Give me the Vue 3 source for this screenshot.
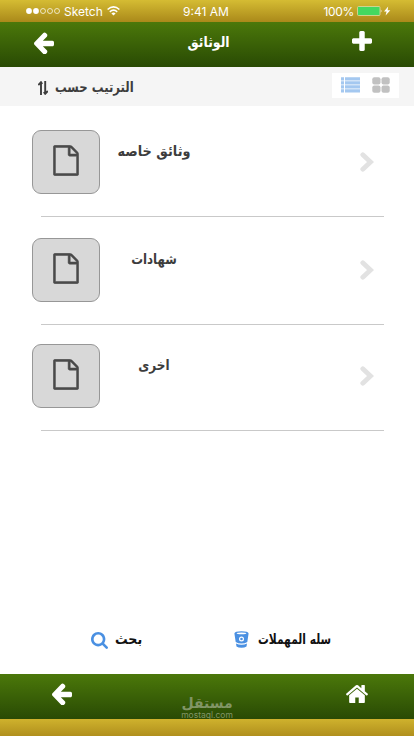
<script setup>
const paths = {
  arrow: { box: '192 147 1472 1558', d: 'M1664 896v128q0 53-32.5 90.5t-84.5 37.5h-704l293 294q38 36 38 90t-38 90l-75 76q-37 37-90 37-52 0-91-37l-651-652q-37-37-37-90 0-52 37-91l651-650q38-38 91-38 52 0 90 38l75 74q38 38 38 91t-38 91l-293 293h704q52 0 84.5 37.5t32.5 90.5z' },
  plus: { box: '192 128 1408 1408', d: 'M1600 736v192q0 40-28 68t-68 28h-416v416q0 40-28 68t-68 28h-192q-40 0-68-28t-28-68v-416h-416q-40 0-68-28t-28-68v-192q0-40 28-68t68-28h416v-416q0-40 28-68t68-28h192q40 0 68 28t28 68v416h416q40 0 68 28t28 68z' },
  file: { box: '-20 -20 1576 1832', d: 'M1468 380q28 28 48 76t20 88v1152q0 40-28 68t-68 28h-1344q-40 0-68-28t-28-68v-1600q0-40 28-68t68-28h896q40 0 88 20t76 48zm-444-244v376h376q-10-29-22-41l-313-313q-12-12-41-22zm384 1528v-1024h-416q-40 0-68-28t-28-68v-416h-768v1536h1280z' },
  search: { box: '64 128 1664 1664', d: 'M1216 832q0-185-131.5-316.5t-316.5-131.5-316.5 131.5-131.5 316.5 131.5 316.5 316.5 131.5 316.5-131.5 131.5-316.5zm512 832q0 52-38 90t-90 38q-54 0-90-38l-343-342q-179 124-399 124-143 0-273.5-55.5t-225-150-150-225-55.5-273.5 55.5-273.5 150-225 225-150 273.5-55.5 273.5 55.5 225 150 150 225 55.5 273.5q0 220-124 399l343 343q37 37 37 90z' },
  home: { box: '88 253 1616 1283', d: 'M1472 992v480q0 26-19 45t-45 19h-384v-384h-256v384h-384q-26 0-45-19t-19-45v-480q0-1 .5-3t.5-3l575-474 575 474q1 2 1 6zm223-69l-62 74q-8 9-21 11h-3q-13 0-21-7l-692-577-692 577q-12 8-24 7-13-2-21-11l-62-74q-8-10-7-23.5t11-21.5l719-599q32-26 76-26t76 26l244 204v-195q0-14 9-23t23-9h192q14 0 23 9t9 23v408l219 182q10 8 11 21.5t-7 23.5z' },
}
const folders = [
  { name: 'وثائق خاصه', stretch: 0.92 },
  { name: 'شهادات', stretch: 0.84 },
  { name: 'اخرى', stretch: 0.86 },
]
</script>

<template>
  <div class="screen">
    <div class="status">
      <div class="carrier">
        <svg class="signal" viewBox="0 0 34 6"><g fill="#fff"><circle cx="3" cy="3" r="2.9" /><circle cx="10" cy="3" r="2.9" /></g><g fill="none" stroke="#fff" stroke-width=".7"><circle cx="17" cy="3" r="2.5" /><circle cx="24" cy="3" r="2.5" /><circle cx="31" cy="3" r="2.5" /></g></svg>
        <span>Sketch</span>
        <svg class="wifi" viewBox="0 0 13 10"><g fill="none" stroke="#fff" stroke-width="1.6"><path d="M.6 3.5Q6.5-1.7 12.4 3.5" /><path d="M2.8 5.8Q6.5 2.6 10.2 5.8" /></g><path d="M4.4 7.4Q6.5 5.8 8.6 7.4L6.5 9.6Z" fill="#fff" /></svg>
      </div>
      <span class="clock">9:41 AM</span>
      <div class="power">
        <span>100%</span>
        <svg class="battery" viewBox="0 0 34 10"><rect x=".5" y=".5" width="22.5" height="9" rx="1" fill="#44d860" stroke="#e5d7a0" stroke-width=".8" /><path d="M23.8 3.3q1.5 1.7 0 3.4z" fill="#fff" /><path d="M31.2.5L27 5.6h2.6L28.6 9.6 33.3 4.2h-2.7z" fill="#fff" /></svg>
      </div>
    </div>

    <header class="bar">
      <svg class="arrow" :viewBox="paths.arrow.box" preserveAspectRatio="none"><path :d="paths.arrow.d" /></svg>
      <h1>الوثائق</h1>
      <svg class="plus" :viewBox="paths.plus.box"><path :d="paths.plus.d" /></svg>
    </header>

    <div class="tools">
      <div class="sort">
        <svg class="sort-icon" viewBox="0 0 10 14"><g fill="none" stroke="#3d3d3d" stroke-width="1.9"><path d="M3 14V1.5M.3 4 3 1.2 4.2 3" /><path d="M7.2 0v12.5M5.8 11l1.4 1.8L9.8 10" /></g></svg>
        <span class="sort-label" dir="rtl">الترتيب حسب</span>
      </div>
      <div class="views">
        <svg class="list-icon" viewBox="0 0 19 16"><g fill="#a4c8f0"><path d="M0 .3h3v3.2H0zM4 .3h15v3.2H4zM0 4.3h3v3.2H0zM4 4.3h15v3.2H4zM0 8.3h3v3.2H0zM4 8.3h15v3.2H4zM0 12.3h3v3.2H0zM4 12.3h15v3.2H4z" /></g></svg>
        <svg class="grid-icon" viewBox="0 0 18 16"><g fill="#c1c1c1"><rect x=".3" y=".3" width="8.2" height="7.2" rx="2" /><rect x="9.5" y=".3" width="8.2" height="7.2" rx="2" /><rect x=".3" y="8.5" width="8.2" height="7.2" rx="2" /><rect x="9.5" y="8.5" width="8.2" height="7.2" rx="2" /></g></svg>
      </div>
    </div>

    <main class="folders">
      <div v-for="folder in folders" :key="folder.name" class="folder">
        <div class="row">
          <div class="thumb"><svg class="file" :viewBox="paths.file.box" preserveAspectRatio="none"><path :d="paths.file.d" /></svg></div>
          <span class="name" dir="rtl" :style="{ transform: `scaleX(${folder.stretch})` }">{{ folder.name }}</span>
          <svg class="chevron" viewBox="0 0 14 20"><path d="M2.8 2.8 10.5 10l-7.7 7.2" fill="none" stroke="#e2e2e2" stroke-width="4.8" stroke-linecap="round" /></svg>
        </div>
      </div>
    </main>

    <div class="actions">
      <div class="action find">
        <svg class="search" :viewBox="paths.search.box"><path :d="paths.search.d" /></svg>
        <span class="find-label" dir="rtl">بحث</span>
      </div>
      <div class="action trash">
        <svg class="bin" viewBox="0 0 15 17"><path d="M.4 2.6Q.7.2 7.5.2t7.1 2.4L13.3 11q-2.3 1.6-5.8 1.6T1.7 11zM2 12.4q2.5 1.4 5.5 1.4t5.5-1.4l-.5 3q-1.8 1.4-5 1.4t-5-1.4z" fill="#4a90e2" /><ellipse cx="7.5" cy="2.4" rx="4.8" ry=".8" fill="#fff" /><circle cx="7.5" cy="8" r="1.9" fill="none" stroke="#fff" stroke-width="1.2" /></svg>
        <span class="trash-label" dir="rtl">سله المهملات</span>
      </div>
    </div>

    <footer class="bar bottom">
      <svg class="arrow" :viewBox="paths.arrow.box" preserveAspectRatio="none"><path :d="paths.arrow.d" /></svg>
      <div class="brand"><span class="brand-name" dir="rtl">مستقل</span><span class="brand-site">mostaql.com</span></div>
      <svg class="home" :viewBox="paths.home.box" preserveAspectRatio="none"><path :d="paths.home.d" /></svg>
    </footer>
    <div class="base"></div>
  </div>
</template>

<style>
body { margin: 0; }
</style>

<style scoped>
* { box-sizing: border-box; }
svg { display: block; flex: none; }
span { white-space: nowrap; }
.screen { width: 414px; height: 736px; background: #fff; display: flex; flex-direction: column; overflow: hidden; font-family: "DejaVu Sans", sans-serif; color: #3d3d3d; }
.status { height: 22px; flex: none; background: linear-gradient(#d5bc33, #aa891a); display: grid; grid-template-columns: 1fr auto 1fr; align-items: center; padding: 2px 23px 0 26px; color: #fff; font: 12px/18px Inter, sans-serif; }
.clock { margin: 0 5px 0 0; }
.carrier, .power { display: flex; align-items: center; }
.carrier { gap: 4px; }
.signal { width: 34px; height: 6px; margin-top: -2px; }
.wifi { width: 13px; height: 10px; margin-top: -3px; }
.power { justify-content: flex-end; gap: 3px; letter-spacing: -.3px; }
.battery { width: 34px; height: 10px; margin-top: -3px; }
.bar { height: 45px; flex: none; background: linear-gradient(#4b780a, #294a04); display: grid; grid-template-columns: 1fr auto 1fr; padding: 0 42px 0 34px; fill: #fff; }
.arrow { width: 20px; height: 22px; margin-top: 10px; }
h1 { margin: 10px -11px 0 0; font-size: 14px; line-height: 20px; font-weight: bold; color: #fff; transform: scaleX(.89); }
.plus { width: 20px; height: 20px; margin-top: 9px; justify-self: end; }
.tools { height: 39px; flex: none; background: #f5f5f5; display: flex; justify-content: space-between; padding: 6px 15px 0 38px; }
.sort { display: flex; gap: 7px; height: 28px; align-items: center; font-size: 14px; font-weight: bold; }
.sort-label { transform: scaleX(.835); transform-origin: left; }
.sort-icon { width: 10px; height: 14px; margin-top: 1px; }
.views { width: 67px; height: 25px; background: #fff; display: flex; gap: 12px; padding: 4px 9px; }
.list-icon { width: 19px; height: 16px; }
.grid-icon { width: 18px; height: 16px; }
.folders { padding: 24px 30px 0 32px; height: 508px; flex: none; display: flex; flex-direction: column; gap: 21px; }
.folder { height: 87px; padding-bottom: 22px; position: relative; }
.folder:last-child { margin-top: -2px; }
.folder::after { content: ""; position: absolute; left: 9px; right: 0; bottom: 0; height: 1px; background: #c9c9c9; }
.row { display: grid; grid-template-columns: 68px 108px 1fr; }
.thumb { width: 68px; height: 64px; border: 1px solid #979797; border-radius: 9px; background: #d8d8d8; padding: 14px 0 0 20px; }
.file { width: 26px; height: 31px; fill: #4a4a4a; stroke: #4a4a4a; stroke-width: 30px; }
.name { text-align: center; font-size: 14px; line-height: 20px; font-weight: bold; margin-top: 11px; }
.chevron { width: 14px; height: 20px; margin-top: 22px; justify-self: end; margin-right: 10px; }
.actions { height: 60px; flex: none; display: flex; padding: 14px 0 0 91px; color: #111; font-size: 14px; font-weight: bold; }
.action { display: flex; height: 22px; align-items: center; }
.find { width: 143px; gap: 7px; }
.trash { gap: 9px; }
.find-label { transform: scaleX(.9); transform-origin: left; }
.trash-label { transform: scaleX(.765); transform-origin: left; }
.search { width: 17px; height: 17px; fill: #4a90e2; margin-top: 3px; }
.bin { width: 15px; height: 17px; margin-top: 1px; }
.bottom { padding: 0 46px 0 52px; }
.bottom .arrow { margin-top: 9px; }
.home { width: 22px; height: 18px; margin-top: 11px; justify-self: end; }
.brand { display: flex; flex-direction: column; align-items: center; color: #819565; margin: 21px 6px 0 0; height: 24px; }
.brand-name { font-size: 14px; line-height: 16px; font-weight: bold; }
.brand-site { font: 8.5px/9px Inter, sans-serif; }
.base { height: 17px; flex: none; background: linear-gradient(#cfb22d, #b08f1d); }
</style>
